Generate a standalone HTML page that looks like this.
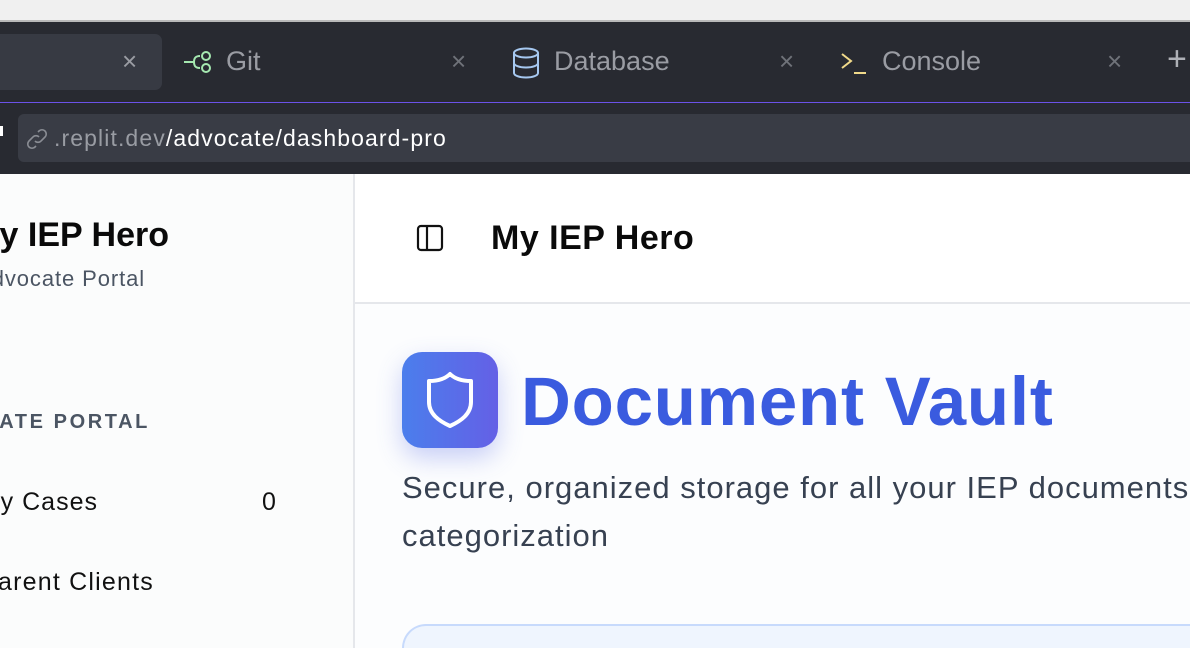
<!DOCTYPE html>
<html style="overflow:hidden;width:1190px;height:648px"><head><style>
*{margin:0;padding:0;box-sizing:border-box}
body{width:1190px;height:648px;overflow:hidden;position:relative;background:#fcfdfe;font-family:"Liberation Sans",sans-serif}
.a{position:absolute;white-space:nowrap}
</style></head><body>
<div class="a" style="left:0;top:0;width:1190px;height:20px;background:#f0f0f0"></div>
<div class="a" style="left:0;top:20px;width:1190px;height:2px;background:#b9b9b9"></div>
<div class="a" style="left:0;top:22px;width:1190px;height:152px;background:#282a31"></div>
<div class="a" style="left:0;top:102px;width:1190px;height:1px;background:#6b52e8"></div>
<div class="a" style="left:-10px;top:34px;width:172px;height:56px;border-radius:7px;background:#373a43"></div>
<div class="a" style="left:122px;top:46px;font-size:26px;color:#9a9ca3">×</div>
<svg class="a" style="left:183px;top:48px" width="32" height="30" viewBox="0 0 32 30" fill="none" stroke="#a5e8b0" stroke-width="2"><path d="M1 14h10M11 14c0-6 4-6 6-6M11 14c0 6 4 6 6 6"/><circle cx="23" cy="8" r="4"/><circle cx="23" cy="20" r="4"/></svg>
<div class="a" style="left:226px;top:46px;font-size:27px;color:#9a9ca3">Git</div>
<div class="a" style="left:451px;top:46px;font-size:26px;color:#6f7279">×</div>
<svg class="a" style="left:512px;top:47px" width="28" height="32" viewBox="0 0 28 32" fill="none" stroke="#a6c8f0" stroke-width="2"><ellipse cx="14" cy="6" rx="12" ry="4.5"/><path d="M2 6v20c0 2.5 5.4 4.5 12 4.5s12-2 12-4.5V6M2 16c0 2.5 5.4 4.5 12 4.5s12-2 12-4.5"/></svg>
<div class="a" style="left:554px;top:46px;font-size:27px;color:#9a9ca3">Database</div>
<div class="a" style="left:779px;top:46px;font-size:26px;color:#6f7279">×</div>
<svg class="a" style="left:840px;top:50px" width="28" height="26" viewBox="0 0 28 26" fill="none" stroke="#f0d98a" stroke-width="2"><path d="M2 4l9 7-9 7M14 23h12"/></svg>
<div class="a" style="left:882px;top:46px;font-size:27px;color:#9a9ca3">Console</div>
<div class="a" style="left:1107px;top:46px;font-size:26px;color:#6f7279">×</div>
<div class="a" style="left:1167px;top:40px;font-size:34px;color:#aeb0b6;font-weight:300">+</div>
<div class="a" style="left:0;top:126px;width:3px;height:10px;background:#fff"></div>
<div class="a" style="left:18px;top:114px;width:1172px;height:48px;border-radius:6px 0 0 6px;background:#393c45"></div>
<svg class="a" style="left:25px;top:127px" width="24" height="24" viewBox="0 0 24 24" fill="none" stroke="#8a8d94" stroke-width="1.6"><path d="M10 14a4 4 0 0 0 6 0l4-4a4 4 0 0 0-6-6l-1 1M14 10a4 4 0 0 0-6 0l-4 4a4 4 0 0 0 6 6l1-1"/></svg>
<div class="a" style="left:54px;top:125px;font-size:23px;color:#999ca3;letter-spacing:1.1px">.replit.dev<span style="color:#fff">/advocate/dashboard-pro</span></div>
<div class="a" style="left:0;top:174px;width:353px;height:474px;background:#fbfcfc"></div>
<div class="a" style="left:353px;top:174px;width:2px;height:474px;background:#e5e7eb"></div>
<div class="a" style="right:1021px;top:216px;font-size:34px;font-weight:bold;color:#0a0a0a">My IEP Hero</div>
<div class="a" style="right:1045px;top:266px;font-size:22px;color:#4b5563;letter-spacing:0.9px">Advocate Portal</div>
<div class="a" style="right:1040px;top:411px;font-size:20px;font-weight:bold;color:#4b5563;letter-spacing:2.6px">ADVOCATE PORTAL</div>
<div class="a" style="right:1092px;top:488px;font-size:25px;color:#111;letter-spacing:1px">My Cases</div>
<div class="a" style="left:262px;top:488px;font-size:25px;color:#111">0</div>
<div class="a" style="right:1036px;top:568px;font-size:25px;color:#111;letter-spacing:1.2px">Parent Clients</div>
<div class="a" style="left:355px;top:174px;width:835px;height:128px;background:#fff"></div>
<div class="a" style="left:355px;top:302px;width:835px;height:2px;background:#e5e7eb"></div>
<svg class="a" style="left:416px;top:224px" width="28" height="28" viewBox="0 0 28 28" fill="none" stroke="#111" stroke-width="2.2"><rect x="2" y="2" width="24" height="24" rx="3"/><path d="M11 2v24"/></svg>
<div class="a" style="left:491px;top:219px;font-size:34px;font-weight:bold;color:#0a0a0a;letter-spacing:0.5px">My IEP Hero</div>
<div class="a" style="left:402px;top:352px;width:96px;height:96px;border-radius:20px;background:linear-gradient(90deg,#4b7eec,#6460e6);box-shadow:0 10px 25px rgba(80,100,230,.3)"></div>
<svg class="a" style="left:424px;top:370px" width="52" height="60" viewBox="0 0 52 60" fill="none" stroke="#fff" stroke-width="4" stroke-linejoin="round"><path d="M26 4C20 10 12 11 5 11v21c0 12 10 19 21 24 11-5 21-12 21-24V11c-7 0-15-1-21-7z"/></svg>
<div class="a" style="left:521px;top:362px;font-size:69px;font-weight:bold;color:#3a5bdf;letter-spacing:0.8px">Document Vault</div>
<div class="a" style="left:402px;top:470px;font-size:31px;color:#374151;letter-spacing:1px">Secure, organized storage for all your IEP documents</div>
<div class="a" style="left:402px;top:518px;font-size:31px;color:#374151;letter-spacing:1px">categorization</div>
<div class="a" style="left:402px;top:624px;width:788px;height:24px;border-radius:24px 0 0 0;border:2px solid #c7dafc;border-right:none;border-bottom:none;background:#eff5fe"></div>
</body></html>
